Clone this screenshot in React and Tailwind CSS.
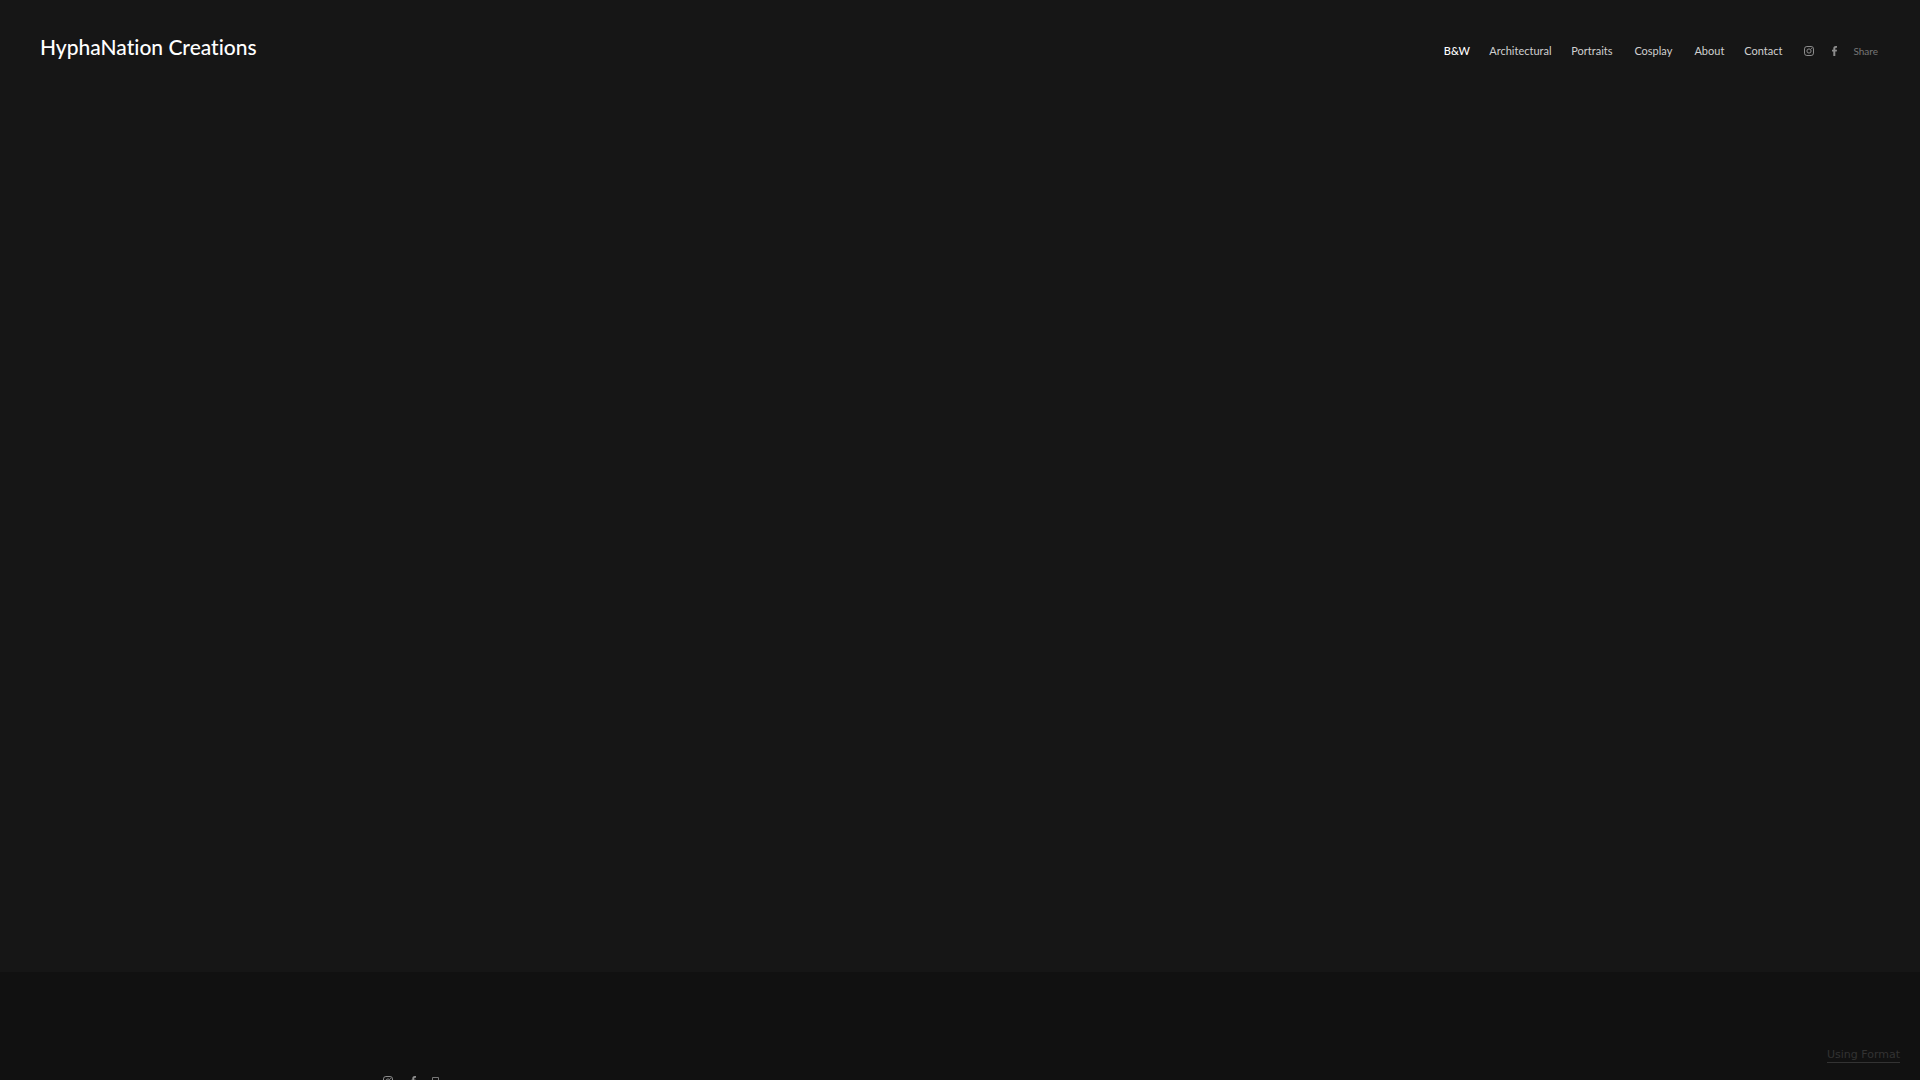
const links = [
    { label: 'B&W', width: 'w-[25px]', active: true },
    { label: 'Architectural', width: 'w-[62px]' },
    { label: 'Portraits', width: 'w-[41px]' },
    { label: 'Cosplay', width: 'w-[42px]' },
    { label: 'About', width: 'w-[30px]' },
    { label: 'Contact', width: 'w-[38px]' },
];

const Instagram = () => (
    <svg viewBox="0 0 10 10" className="w-[10px] h-[10px]" fill="none" stroke="currentColor">
        <rect x="0.5" y="0.5" width="9" height="9" rx="2.4" />
        <circle cx="5" cy="5" r="2.1" />
        <circle cx="7.7" cy="2.3" r="0.6" fill="currentColor" stroke="none" />
    </svg>
);

const Facebook = () => (
    <svg viewBox="0 0 6 10" className="w-[6px] h-[10px]" fill="currentColor">
        <path d="M1.3 10V5.6H0V3.8H1.3V2.5C1.3 0.9 2.1 0 3.6 0H5V1.7H4.1C3.5 1.7 3.3 2 3.3 2.6V3.8H5L4.8 5.6H3.3V10Z" />
    </svg>
);

const ShareIcon = () => (
    <svg viewBox="0 0 8 10" className="w-2 h-[10px]" fill="none" stroke="currentColor">
        <path d="M0.5 9.5V1.5H6.5V9.5Z" />
    </svg>
);

const App = () => {
    return (
        <div className="flex flex-col h-screen overflow-hidden bg-[#161616] text-white font-['Lato',sans-serif]">
            <header className="flex items-start justify-between px-10 pt-[31px]">
                <h1 className="text-[21px] leading-8 font-medium [font-variant-ligatures:none]">
                    <a href="#home">HyphaNation Creations</a>
                </h1>

                <div className="flex items-center pt-2">
                    <nav className="flex items-center gap-5 text-[11px] leading-6 text-[#d0d0d0]">
                        {links.map(({ label, width, active }) => (
                            <a
                                key={label}
                                href="#gallery"
                                className={`flex justify-center whitespace-nowrap ${width} ${active ? 'font-medium text-white' : ''}`}
                            >
                                {label}
                            </a>
                        ))}
                    </nav>

                    <div className="flex items-center pl-[22px] text-[#8c8c8c]">
                        <a href="#instagram" aria-label="Instagram"><Instagram /></a>
                        <a href="#facebook" aria-label="Facebook" className="ml-[18px]"><Facebook /></a>
                        <button type="button" className="ml-[15px] mr-[2px] text-[10px] leading-6 text-[#777777]">Share</button>
                    </div>
                </div>
            </header>

            <main className="flex-1" />

            {/* Footer runs past the bottom of the window */}
            <footer className="flex h-[108px] justify-between bg-[#111111]">
                <div className="flex items-start pt-[104px] pl-[383px] text-[#8c8c8c]">
                    <a href="#instagram" aria-label="Instagram"><Instagram /></a>
                    <a href="#facebook" aria-label="Facebook" className="ml-[18px]"><Facebook /></a>
                    <a href="#share" aria-label="Share" className="ml-[15px] text-[#777777]"><ShareIcon /></a>
                </div>
                <div className="pt-[76px] pr-5">
                    <a
                        href="#format"
                        className="block border-b border-[#333333] text-[11px] leading-[14px] text-[#333333] font-['DejaVu_Sans',sans-serif]"
                    >
                        Using Format
                    </a>
                </div>
            </footer>
        </div>
    );
};

export default App;
